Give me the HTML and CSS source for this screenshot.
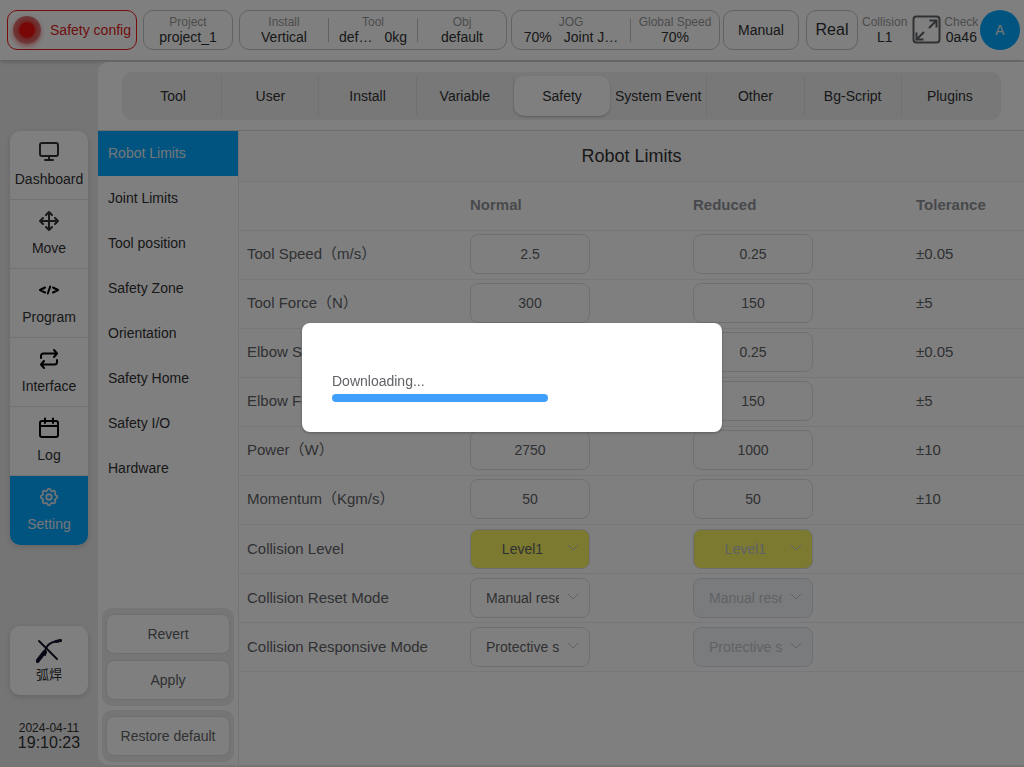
FILE: index.html
```html
<!DOCTYPE html>
<html lang="en">
<head>
    <meta charset="UTF-8">
    <meta name="viewport" content="width=device-width, initial-scale=1.0">
    <title>Robot Limits</title>
    <link rel="stylesheet" href="styles.css">
</head>
<body>
    <header class="topbar">
        <button type="button" class="box status"><span class="lamp"></span>Safety config</button>
        <div class="box project">
            <div class="info"><span class="info-name">Project</span><span>project_1</span></div>
        </div>
        <div class="box setup">
            <div class="info"><span class="info-name">Install</span><span>Vertical</span></div>
            <div class="info"><span class="info-name">Tool</span><span class="pair"><span>def…</span><span>0kg</span></span></div>
            <div class="info"><span class="info-name">Obj</span><span>default</span></div>
        </div>
        <div class="box jog">
            <div class="info info-wide"><span class="info-name">JOG</span><span class="pair"><span>70%</span><span>Joint J…</span></span></div>
            <div class="info"><span class="info-name">Global Speed</span><span>70%</span></div>
        </div>
        <button type="button" class="box manual">Manual</button>
        <button type="button" class="box real">Real</button>
        <div class="info plain"><span class="info-name">Collision</span><span>L1</span></div>
        <button type="button" class="expand" aria-label="Full screen">
            <svg width="30" height="30" viewBox="0 0 30 30" fill="none" stroke="#606266" stroke-width="2">
                <rect x="1.500" y="1.500" width="26" height="26" rx="3"/>
                <path d="M17 13l7-7M17.500 5.500h7v7M12 17l-7 7M11.500 24.500h-7v-7"/>
            </svg>
        </button>
        <div class="info plain"><span class="info-name">Check</span><span>0a46</span></div>
        <button type="button" class="avatar">A</button>
    </header>

    <div class="layout">
        <aside class="sidebar">
            <nav class="menu">
                <a href="#" class="menu-item">
                    <svg width="22" height="22" viewBox="0 0 22 22" fill="none" stroke="#303133" stroke-width="2">
                        <rect x="2" y="2" width="18" height="13" rx="2"/>
                        <path d="M11 15v4M7 19h8" stroke-linecap="round"/>
                    </svg>
                    Dashboard
                </a>
                <a href="#" class="menu-item">
                    <svg width="22" height="22" viewBox="0 0 22 22" fill="none" stroke="#303133" stroke-width="2" stroke-linecap="round" stroke-linejoin="round">
                        <path d="M11 2v18M2 11h18M8 5l3-3 3 3M8 17l3 3 3-3M5 8l-3 3 3 3M17 8l3 3-3 3"/>
                    </svg>
                    Move
                </a>
                <a href="#" class="menu-item">
                    <svg width="22" height="22" viewBox="0 0 22 22" fill="none" stroke="#000" stroke-width="2" stroke-linecap="round" stroke-linejoin="round">
                        <path d="M7 8.500L2 11l5 2.500M15 8.500l5 2.500-5 2.500M12.200 7.500l-2.400 7"/>
                    </svg>
                    Program
                </a>
                <a href="#" class="menu-item">
                    <svg width="22" height="22" viewBox="0 0 22 22" fill="none" stroke="#000" stroke-width="2" stroke-linecap="round" stroke-linejoin="round">
                        <path d="M16 2l3 3.500L16 9M3 10V8q0-2.500 2.500-2.500H19M6 13l-3 3.500L6 20M19 12v2q0 2.500-2.500 2.500H3"/>
                    </svg>
                    Interface
                </a>
                <a href="#" class="menu-item">
                    <svg width="22" height="22" viewBox="0 0 22 22" fill="none" stroke="#000" stroke-width="2" stroke-linecap="round">
                        <rect x="2" y="4" width="18" height="16" rx="2"/>
                        <path d="M2 9h18M7 1.500V6M15 1.500V6"/>
                    </svg>
                    Log
                </a>
                <a href="#" class="menu-item menu-active">
                    <svg width="22" height="22" viewBox="0 0 24 24" fill="none" stroke="#dfe6ec" stroke-width="2" stroke-linejoin="round">
                        <path d="M10.300 4.300c.4-1.800 3-1.800 3.400 0a1.700 1.700 0 0 0 2.600 1.100c1.500-1 3.300.8 2.400 2.400a1.700 1.700 0 0 0 1 2.500c1.800.4 1.800 3 0 3.400a1.700 1.700 0 0 0-1 2.600c.9 1.500-.9 3.300-2.400 2.400a1.700 1.700 0 0 0-2.600 1c-.4 1.800-3 1.800-3.400 0a1.700 1.700 0 0 0-2.600-1c-1.500.9-3.300-.9-2.400-2.400a1.700 1.700 0 0 0-1-2.600c-1.800-.4-1.800-3 0-3.400a1.700 1.700 0 0 0 1-2.500c-.9-1.600.9-3.400 2.400-2.400a1.700 1.700 0 0 0 2.600-1.100z"/>
                        <circle cx="12" cy="12" r="3"/>
                    </svg>
                    Setting
                </a>
            </nav>
            <button type="button" class="weld">
                <svg width="26" height="24" viewBox="0 0 26 24" fill="none" stroke="#10102a" stroke-linecap="round">
                    <path d="M3 2l18 18" stroke-width="2"/>
                    <path d="M1.500 22l7-9" stroke-width="4"/>
                    <path d="M9 12c1-5 4-8 10-9.500" stroke-width="2"/>
                    <path d="M20 2.500l4.500-1" stroke-width="3"/>
                    <path d="M9 16l1-3" stroke-width="2"/>
                </svg>
                弧焊
            </button>
            <div class="clock">
                <div class="date">2024-04-11</div>
                <div class="time">19:10:23</div>
            </div>
        </aside>

        <main class="main">
            <div class="tabs-wrap">
                <nav class="tabs">
                    <a href="#" class="tab">Tool</a>
                    <a href="#" class="tab">User</a>
                    <a href="#" class="tab">Install</a>
                    <a href="#" class="tab">Variable</a>
                    <a href="#" class="tab tab-active">Safety</a>
                    <a href="#" class="tab">System Event</a>
                    <a href="#" class="tab">Other</a>
                    <a href="#" class="tab">Bg-Script</a>
                    <a href="#" class="tab">Plugins</a>
                </nav>
            </div>
            <div class="page">
                <div class="side">
                    <nav class="submenu">
                        <a href="#" class="sub-item sub-active">Robot Limits</a>
                        <a href="#" class="sub-item">Joint Limits</a>
                        <a href="#" class="sub-item">Tool position</a>
                        <a href="#" class="sub-item">Safety Zone</a>
                        <a href="#" class="sub-item">Orientation</a>
                        <a href="#" class="sub-item">Safety Home</a>
                        <a href="#" class="sub-item">Safety I/O</a>
                        <a href="#" class="sub-item">Hardware</a>
                    </nav>
                    <div class="actions">
                        <div class="action-group">
                            <button type="button" class="action">Revert</button>
                            <button type="button" class="action">Apply</button>
                        </div>
                        <div class="action-group">
                            <button type="button" class="action">Restore default</button>
                        </div>
                    </div>
                </div>
                <section class="content">
                    <h1 class="title">Robot Limits</h1>
                    <table class="limits">
                        <colgroup>
                            <col class="col"><col class="col"><col class="col"><col>
                        </colgroup>
                        <thead>
                            <tr><th></th><th>Normal</th><th>Reduced</th><th>Tolerance</th></tr>
                        </thead>
                        <tbody>
                            <tr>
                                <td>Tool Speed（m/s）</td>
                                <td><input class="field" type="text" value="2.5" aria-label="Tool Speed normal"></td>
                                <td><input class="field" type="text" value="0.25" aria-label="Tool Speed reduced"></td>
                                <td>±0.05</td>
                            </tr>
                            <tr>
                                <td>Tool Force（N）</td>
                                <td><input class="field" type="text" value="300" aria-label="Tool Force normal"></td>
                                <td><input class="field" type="text" value="150" aria-label="Tool Force reduced"></td>
                                <td>±5</td>
                            </tr>
                            <tr>
                                <td>Elbow Speed（m/s）</td>
                                <td><input class="field" type="text" value="2.5" aria-label="Elbow Speed normal"></td>
                                <td><input class="field" type="text" value="0.25" aria-label="Elbow Speed reduced"></td>
                                <td>±0.05</td>
                            </tr>
                            <tr>
                                <td>Elbow Force（N）</td>
                                <td><input class="field" type="text" value="300" aria-label="Elbow Force normal"></td>
                                <td><input class="field" type="text" value="150" aria-label="Elbow Force reduced"></td>
                                <td>±5</td>
                            </tr>
                            <tr>
                                <td>Power（W）</td>
                                <td><input class="field" type="text" value="2750" aria-label="Power normal"></td>
                                <td><input class="field" type="text" value="1000" aria-label="Power reduced"></td>
                                <td>±10</td>
                            </tr>
                            <tr>
                                <td>Momentum（Kgm/s）</td>
                                <td><input class="field" type="text" value="50" aria-label="Momentum normal"></td>
                                <td><input class="field" type="text" value="50" aria-label="Momentum reduced"></td>
                                <td>±10</td>
                            </tr>
                            <tr class="select-row">
                                <td>Collision Level</td>
                                <td>
                                    <div class="picker">
                                        <select class="field level" aria-label="Collision Level normal"><option>Level1</option></select>
                                        <svg class="arrow" width="12" height="8" viewBox="0 0 12 8"><path d="M1 1l5 5 5-5"/></svg>
                                    </div>
                                </td>
                                <td>
                                    <div class="picker">
                                        <select class="field level" aria-label="Collision Level reduced" disabled><option>Level1</option></select>
                                        <svg class="arrow" width="12" height="8" viewBox="0 0 12 8"><path d="M1 1l5 5 5-5"/></svg>
                                    </div>
                                </td>
                                <td></td>
                            </tr>
                            <tr class="select-row">
                                <td>Collision Reset Mode</td>
                                <td>
                                    <div class="picker">
                                        <select class="field" aria-label="Collision Reset Mode normal"><option>Manual reset</option></select>
                                        <svg class="arrow" width="12" height="8" viewBox="0 0 12 8"><path d="M1 1l5 5 5-5"/></svg>
                                    </div>
                                </td>
                                <td>
                                    <div class="picker">
                                        <select class="field" aria-label="Collision Reset Mode reduced" disabled><option>Manual reset</option></select>
                                        <svg class="arrow" width="12" height="8" viewBox="0 0 12 8"><path d="M1 1l5 5 5-5"/></svg>
                                    </div>
                                </td>
                                <td></td>
                            </tr>
                            <tr class="select-row">
                                <td>Collision Responsive Mode</td>
                                <td>
                                    <div class="picker">
                                        <select class="field" aria-label="Collision Responsive Mode normal"><option>Protective stop</option></select>
                                        <svg class="arrow" width="12" height="8" viewBox="0 0 12 8"><path d="M1 1l5 5 5-5"/></svg>
                                    </div>
                                </td>
                                <td>
                                    <div class="picker">
                                        <select class="field" aria-label="Collision Responsive Mode reduced" disabled><option>Protective stop</option></select>
                                        <svg class="arrow" width="12" height="8" viewBox="0 0 12 8"><path d="M1 1l5 5 5-5"/></svg>
                                    </div>
                                </td>
                                <td></td>
                            </tr>
                        </tbody>
                    </table>
                </section>
            </div>
        </main>
    </div>

    <div class="overlay">
        <div class="dialog" role="dialog" aria-modal="true">
            <label class="dialog-text" for="download">Downloading...</label>
            <progress class="bar" id="download" value="60" max="100"></progress>
        </div>
    </div>
</body>
</html>
```
FILE: styles.css
```css
* {
    box-sizing: border-box;
}
body {
    margin: 0;
    height: 100vh;
    display: flex;
    flex-direction: column;
    overflow: hidden;
    background-color: #ebebeb;
    color: #303133;
    font-family: "Liberation Sans", Arial, "Noto Sans CJK SC", sans-serif;
    font-size: 14px;
}
a {
    color: inherit;
    text-decoration: none;
}
button, input, select {
    font: inherit;
    color: inherit;
}
button {
    cursor: pointer;
}

/* top bar */
.topbar {
    display: flex;
    align-items: center;
    flex: none;
    height: 60px;
    padding: 0 4px 0 7px;
    background-color: #fff;
    box-shadow: 0 2px 4px rgba(0, 0, 0, 0.2);
    white-space: nowrap;
}
.box {
    display: flex;
    align-items: center;
    justify-content: center;
    flex: none;
    height: 40px;
    padding: 0;
    border: 1px solid #c4c4c4;
    border-radius: 10px;
    background-color: #fff;
}
.status {
    width: 130px;
    gap: 9px;
    margin-right: 6px;
    border-color: #f01818;
    color: #e02020;
}
.lamp {
    width: 28px;
    height: 28px;
    border-radius: 50%;
    background: radial-gradient(circle, #f01010 0, #f01010 7px, #e05050 9px, #dd7777 14px);
    box-shadow: 0 2px 5px rgba(240, 60, 60, 0.6);
}
.project {
    width: 90px;
    margin-right: 6px;
}
.setup {
    width: 268px;
    margin-right: 4px;
}
.jog {
    width: 209px;
    margin-right: 3px;
}
.manual {
    width: 76px;
    margin-right: 7px;
}
.real {
    width: 52px;
    margin-right: 4px;
    font-size: 16px;
}
.info {
    display: flex;
    flex-direction: column;
    align-items: center;
    flex: 1;
    line-height: 15px;
}
.info + .info {
    border-left: 1px solid #c4c4c4;
    height: 24px;
    justify-content: center;
}
.info-wide {
    flex: none;
    width: 118px;
}
.info-name {
    font-size: 12px;
    color: #999;
}
.pair {
    display: flex;
    gap: 12px;
}
.plain {
    flex: none;
}
.expand {
    display: flex;
    margin: 0 2px 0 5px;
    padding: 0;
    border: none;
    background: none;
}
.avatar {
    width: 40px;
    height: 40px;
    margin-left: auto;
    padding: 0;
    border: none;
    border-radius: 50%;
    background-color: #00a8ff;
    color: #e8eef2;
}

/* frame */
.layout {
    display: flex;
    flex: 1;
    min-height: 0;
    padding: 2px 0;
}
.sidebar {
    display: flex;
    flex-direction: column;
    flex: none;
    width: 98px;
    padding: 69px 10px 14px;
}
.menu, .weld {
    border-radius: 10px;
    background-color: #fff;
    box-shadow: 0 2px 6px rgba(0, 0, 0, 0.15);
}
.menu {
    overflow: hidden;
}
.menu-item {
    display: flex;
    flex-direction: column;
    align-items: center;
    gap: 8px;
    height: 69px;
    padding-top: 10px;
    line-height: 16px;
    border-bottom: 1px solid #e4e4e4;
}
.menu-active {
    border-bottom: none;
    background-color: #00a8ff;
    color: #e8eef2;
}
.weld {
    display: flex;
    flex-direction: column;
    align-items: center;
    justify-content: center;
    gap: 1px;
    height: 69px;
    margin: auto 0 26px;
    padding: 0;
    border: none;
    font-size: 13px;
}
.clock {
    text-align: center;
}
.date {
    font-size: 12px;
    line-height: 14px;
}
.time {
    font-size: 16px;
    line-height: 16px;
}
.main {
    display: flex;
    flex-direction: column;
    flex: 1;
    min-width: 0;
    overflow: hidden;
    border-radius: 10px 0 0 10px;
    background-color: #fff;
}

/* tabs */
.tabs-wrap {
    flex: none;
    padding: 10px 23px 10px 24px;
    border-bottom: 1px solid #dcdcdc;
}
.tabs {
    display: flex;
    padding: 4px 3px;
    border-radius: 10px;
    background-color: #f0f0f0;
}
.tab {
    flex: 1;
    height: 40px;
    line-height: 40px;
    border-right: 1px solid #e2e2e2;
    text-align: center;
    white-space: nowrap;
}
.tab:last-child {
    border-right: none;
}
.tab-active {
    border-right: none;
    border-radius: 10px;
    background-color: #fff;
    box-shadow: 0 1px 2px rgba(0, 0, 0, 0.25);
}

/* left column */
.page {
    display: flex;
    flex: 1;
    min-height: 0;
}
.side {
    display: flex;
    flex-direction: column;
    justify-content: space-between;
    flex: none;
    width: 141px;
    border-right: 1px solid #e8e8e8;
}
.sub-item {
    display: block;
    height: 45px;
    padding-left: 10px;
    line-height: 45px;
}
.sub-active {
    background-color: #00a8ff;
    color: #e8eef2;
}
.actions {
    display: flex;
    flex-direction: column;
    gap: 4px;
    padding: 0 4px 3px;
}
.action-group {
    display: flex;
    flex-direction: column;
    gap: 6px;
    padding: 6px 4px;
    border-radius: 10px;
    background-color: #ebebeb;
}
.action {
    height: 40px;
    padding: 0;
    border: 1px solid #dcdfe6;
    border-radius: 8px;
    background-color: #fff;
    color: #606266;
}

/* limits table */
.content {
    flex: 1;
    min-width: 0;
}
.title {
    margin: 0;
    height: 51px;
    border-bottom: 1px solid #ebeef5;
    background-color: #fafafa;
    font-size: 18px;
    font-weight: normal;
    line-height: 50px;
    text-align: center;
}
.limits {
    width: 100%;
    border-collapse: separate;
    border-spacing: 0;
    table-layout: fixed;
    color: #606266;
    font-size: 15px;
}
.col {
    width: 223px;
}
.limits th, .limits td {
    height: 49px;
    padding: 3px 8px 5px;
    border-bottom: 1px solid #ebeef5;
    line-height: 20px;
    text-align: left;
    white-space: nowrap;
}
.limits th {
    color: #909399;
}
.limits .select-row td {
    padding: 4px 8px;
}
.field {
    display: block;
    width: 120px;
    height: 40px;
    padding: 0 15px;
    border: 1px solid #dcdfe6;
    border-radius: 8px;
    background-color: #fff;
    color: #606266;
    font-size: 14px;
    text-align: center;
}
.picker {
    position: relative;
    width: 120px;
}
select.field {
    appearance: none;
    padding: 0 30px 0 15px;
    text-align: left;
}
select.field:disabled {
    background-color: #f5f7fa;
    color: #c0c4cc;
    opacity: 1;
}
select.level, select.level:disabled {
    background-color: #f8f460;
    text-align: center;
}
.arrow {
    position: absolute;
    top: 15px;
    right: 11px;
    fill: none;
    stroke: #c0c4cc;
    pointer-events: none;
}

/* download dialog */
.overlay {
    position: fixed;
    inset: 0;
    display: flex;
    align-items: center;
    justify-content: center;
    padding-bottom: 12px;
    background-color: rgba(0, 0, 0, 0.5);
}
.dialog {
    width: 420px;
    max-width: 90%;
    padding: 50px 30px 30px;
    border-radius: 8px;
    background-color: #fff;
    box-shadow: 0 1px 3px rgba(0, 0, 0, 0.3);
}
.dialog-text {
    display: block;
    padding-bottom: 4px;
    color: #606266;
    line-height: 17px;
}
.bar {
    display: block;
    width: 100%;
    height: 8px;
    appearance: none;
    border: none;
}
.bar::-webkit-progress-bar {
    background-color: transparent;
}
.bar::-webkit-progress-value {
    border-radius: 4px;
    background-color: #409eff;
}
```
